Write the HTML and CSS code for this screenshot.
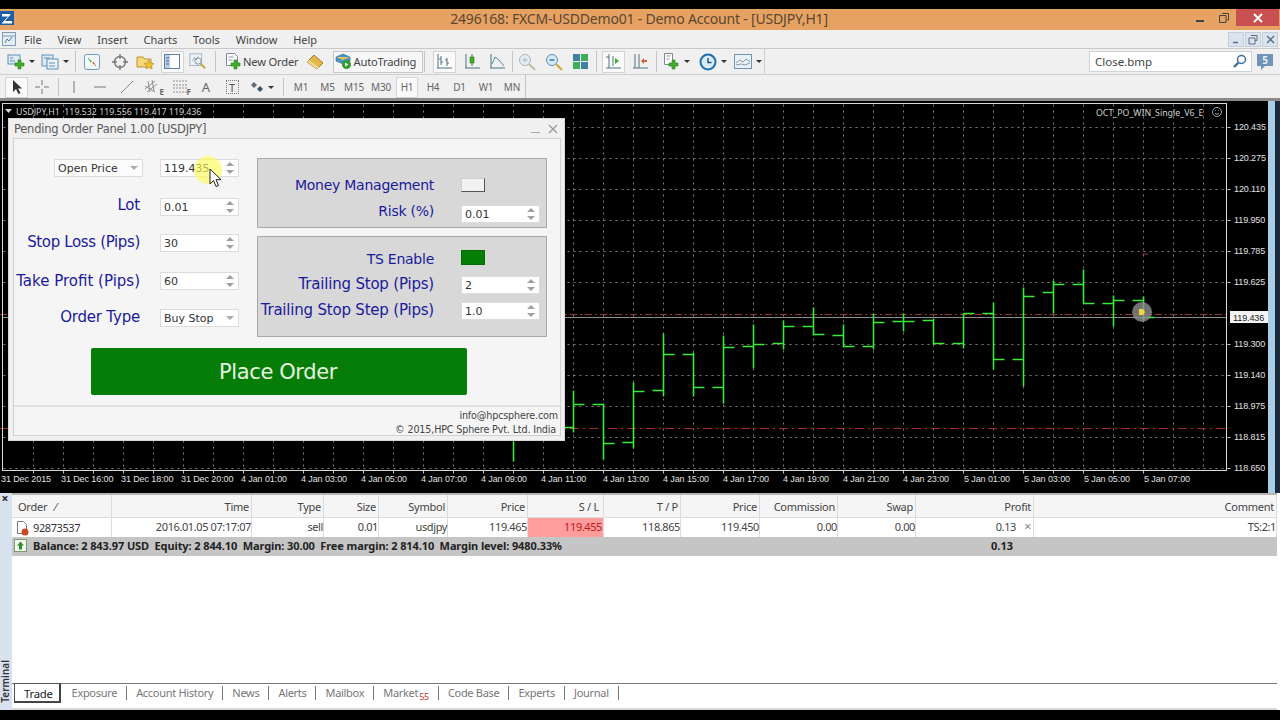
FILE: index.html
```html
<!DOCTYPE html>
<html lang="en">
<head>
<meta charset="utf-8">
<title>MetaTrader</title>
<link rel="stylesheet" href="styles.css">
</head>
<body>
<div class="app">
  <div class="blackbar"></div>

  <header class="titlebar">
    <svg class="logo" viewBox="0 0 14 14"><rect width="14" height="14" fill="#1c5fa8"/><path d="M2 3h9L5 10h7v2.500H1.500L8 5.500H2z" fill="#fff"/></svg>
    <span class="title">2496168: FXCM-USDDemo01 - Demo Account - [USDJPY,H1]</span>
    <div class="winctl">
      <span class="wbtn"><svg width="10" height="10" viewBox="0 0 10 10"><rect x="1" y="7" width="8" height="2" fill="#444"/></svg></span>
      <span class="wbtn"><svg width="10" height="10" viewBox="0 0 10 10"><path d="M3 .5h6.500v6.500H7.500M.5 2.500h6.500v7H.5z" fill="none" stroke="#444"/></svg></span>
      <span class="wclose"><svg width="10" height="10" viewBox="0 0 10 10"><path d="M1 1l8 8M9 1l-8 8" stroke="#fff" stroke-width="2"/></svg></span>
    </div>
  </header>

  <nav class="menubar">
    <svg class="menuicon" width="14" height="16" viewBox="0 0 14 16"><rect x=".5" y="1.500" width="13" height="13" fill="#e4edf6" stroke="#7f9bb8"/><path d="M1 5h12" stroke="#7f9bb8"/><path d="M3 12l2-4 2 2 3-4" fill="none" stroke="#4d7fa8"/></svg>
    <span class="menuitem">File</span><span class="menuitem">View</span><span class="menuitem">Insert</span><span class="menuitem">Charts</span><span class="menuitem">Tools</span><span class="menuitem">Window</span><span class="menuitem">Help</span>
    <div class="mdi">
      <span class="mdibtn"><svg width="8" height="8" viewBox="0 0 8 8"><path d="M1 6.500h5" stroke="#5a6f85" stroke-width="1.500"/></svg></span>
      <span class="mdibtn"><svg width="10" height="10" viewBox="0 0 10 10"><path d="M3 .5h6v5H7M1 3h6v6H1z" fill="none" stroke="#5a6f85"/></svg></span>
      <span class="mdibtn"><svg width="9" height="9" viewBox="0 0 9 9"><path d="M1 1l7 7M8 1l-7 7" stroke="#5a6f85" stroke-width="1.400"/></svg></span>
    </div>
  </nav>

  <div class="toolrow1">
    <div class="tb1">
      <span class="cell"><svg width="18" height="18" viewBox="0 0 18 18"><rect x="1" y="2" width="12" height="9" fill="#dfeaf4" stroke="#5f8fb5"/><path d="M3 5h3M3 8h5" stroke="#5f8fb5"/><path d="M11 7h3v3h3v3h-3v3h-3v-3H8v-3h3z" fill="#3fae2a" stroke="#2a7d1a" stroke-width=".6"/></svg><i class="caret"></i></span>
      <span class="cell"><svg width="18" height="18" viewBox="0 0 18 18"><rect x="1" y="2" width="11" height="11" fill="#dfeaf4" stroke="#5f8fb5"/><rect x="6" y="6" width="11" height="10" fill="#eaf1f8" stroke="#5f8fb5"/><path d="M3 5h6M8 10h6M8 13h6" stroke="#5f8fb5"/></svg><i class="caret"></i></span>
      <span class="sep"></span>
      <span class="cell"><svg width="18" height="18" viewBox="0 0 18 18"><rect x="1.500" y="1.500" width="15" height="15" rx="2" fill="#f4f8fb" stroke="#6e9bbd"/><path d="M6 6.500l3 1.500-1.500 1.500z" fill="#3fae2a"/><path d="M12 11.500l-3-1.500 1.500-1.500z" fill="#d8623a"/><path d="M5 5l3 3" stroke="#3fae2a"/><path d="M10 10l3 3" stroke="#d8623a"/></svg></span>
      <span class="cell"><svg width="18" height="18" viewBox="0 0 18 18"><circle cx="9" cy="9" r="5.500" fill="none" stroke="#777" stroke-width="1.400"/><path d="M9 1v5M9 12v5M1 9h5M12 9h5" stroke="#777" stroke-width="1.400"/></svg></span>
      <span class="cell"><svg width="19" height="18" viewBox="0 0 19 18"><path d="M1 4h6l2 2h6v8H1z" fill="#f5d777" stroke="#b8923a"/><path d="M13 7l1.500 3 3.500.5-2.500 2.300.6 3.200-3.100-1.600-3 1.600.6-3.200L8 10.500l3.500-.5z" fill="#f2c230" stroke="#a8862a" stroke-width=".6"/></svg></span>
      <span class="cell"><span class="activebox"><svg width="16" height="15" viewBox="0 0 16 15"><rect x=".5" y=".5" width="15" height="14" fill="#fff" stroke="#5f7f9f"/><rect x="1" y="1" width="5" height="13" fill="#b9d0e6"/><path d="M2 4h3M2 7h3M2 10h3" stroke="#44648a"/></svg></span></span>
      <span class="cell"><svg width="20" height="19" viewBox="0 0 20 19"><rect x="1" y="1" width="13" height="13" fill="#eef2f6" stroke="#9fb2c6"/><path d="M4 9l2-4 2 3 2-4" fill="none" stroke="#8aa0b6"/><circle cx="10" cy="9" r="3.500" fill="none" stroke="#7c8fa6"/><path d="M13 12l5 5" stroke="#c9a13a" stroke-width="2"/></svg></span>
      <span class="sep"></span>
      <span class="cell start"><svg width="18" height="19" viewBox="0 0 18 19"><path d="M2.500 1.500h8l3 3v9h-11z" fill="#fff" stroke="#7d8a98"/><path d="M4.500 5h5M4.500 8h4" stroke="#8a97a5"/><path d="M10 8h3v3h3v3h-3v3h-3v-3H7v-3h3z" fill="#3fae2a" stroke="#2a7d1a" stroke-width=".6"/></svg><span class="tbtext">New Order</span></span>
      <span class="cell"><svg width="20" height="18" viewBox="0 0 20 18"><path d="M9 2l9 8-6 6-10-7z" fill="#e4b64c" stroke="#a07a22"/><path d="M2 9l10 7 2-2L4 7z" fill="#f3d98c"/></svg></span>
      <span class="cell"><span class="autobox"><svg width="17" height="17" viewBox="0 0 17 17"><path d="M8 1l7 3v4l-7 3-7-3V4z" fill="#4b93c9" stroke="#2a6794" stroke-width=".6"/><path d="M1 4l7 3 7-3" fill="#e4c35a"/><circle cx="11.500" cy="11.500" r="4.500" fill="#2f9d2a"/><path d="M10 9.500l3.500 2-3.500 2z" fill="#fff"/></svg><span class="tbtext">AutoTrading</span></span></span>
      <span class="sepline"></span>
      <span class="cell"><span class="activebox"><svg class="chartic" width="17" height="17" viewBox="0 0 17 17"><path d="M1 15h15M2 1v14M5 3v9M5 6H3M5 9h2M11 5v8M11 7H9M11 10h2" stroke="#4f7386" fill="none"/></svg></span></span>
      <span class="cell"><svg width="17" height="17" viewBox="0 0 17 17"><path d="M1 15h15M2 1v14" stroke="#4f7386"/><path d="M8 1v12" stroke="#3d8a3a"/><rect x="6" y="4" width="4" height="6" fill="#3fae2a" stroke="#2a7d1a" stroke-width=".6"/></svg></span>
      <span class="cell"><svg width="17" height="17" viewBox="0 0 17 17"><path d="M1 15h15M2 1v14" stroke="#4f7386"/><path d="M3 11l3-7 4 3 5 6" fill="none" stroke="#5c8aa0"/></svg></span>
      <span class="sep"></span>
      <span class="cell"><svg width="18" height="18" viewBox="0 0 18 18"><circle cx="7" cy="7" r="5.500" fill="#e6eef5" stroke="#a9b5c1"/><path d="M4.500 7h5M7 4.500v5" stroke="#a9b5c1"/><path d="M11 11l6 6" stroke="#c5bd9c" stroke-width="2"/></svg></span>
      <span class="cell"><svg width="18" height="18" viewBox="0 0 18 18"><circle cx="7" cy="7" r="5.500" fill="#d8e9f6" stroke="#5c8db0"/><path d="M4.500 7h5" stroke="#3a6d92" stroke-width="1.400"/><path d="M11 11l6 6" stroke="#d3a63a" stroke-width="2"/></svg></span>
      <span class="cell"><svg width="17" height="17" viewBox="0 0 17 17"><rect x="1" y="1" width="7" height="7" fill="#3f7f9f"/><rect x="9" y="1" width="7" height="7" fill="#3fae5a"/><rect x="1" y="9" width="7" height="7" fill="#3fae5a"/><rect x="9" y="9" width="7" height="7" fill="#3f7f9f"/></svg></span>
      <span class="sep"></span>
      <span class="cell"><span class="activebox"><svg width="17" height="17" viewBox="0 0 17 17"><path d="M1 15h15M4 1v14M1 4h3M8 3v10" stroke="#4f7386" fill="none"/><path d="M10 5l4 3-4 3z" fill="#3fae2a"/></svg></span></span>
      <span class="cell"><svg width="17" height="17" viewBox="0 0 17 17"><path d="M1 15h15M3 1v14M7 1v14" stroke="#4f7386" fill="none"/><path d="M9 8l3-3v2h3v2h-3v2z" fill="#c9653a"/></svg></span>
      <span class="sep"></span>
      <span class="cell"><svg width="18" height="19" viewBox="0 0 18 19"><path d="M2.500 1.500h8v11h-8z" fill="#fff" stroke="#7d8a98"/><path d="M4.500 4h4M4.500 7h3" stroke="#8a97a5"/><path d="M10 8h3v3h3v3h-3v3h-3v-3H7v-3h3z" fill="#3fae2a" stroke="#2a7d1a" stroke-width=".6"/></svg><i class="caret"></i></span>
      <span class="cell"><svg width="18" height="18" viewBox="0 0 18 18"><circle cx="9" cy="9" r="7.500" fill="#dbeaf7" stroke="#1f6fb0" stroke-width="2"/><path d="M9 5v4.500h3.500" fill="none" stroke="#1f4f80" stroke-width="1.400"/></svg><i class="caret"></i></span>
      <span class="cell"><svg width="18" height="15" viewBox="0 0 18 15"><rect x=".5" y=".5" width="17" height="14" fill="#e9f1f8" stroke="#6f94b5"/><path d="M2 9l4-3 3 2 3-3 4 3M2 11l5-1 4 1 5-2" fill="none" stroke="#8a9aa8"/></svg><i class="caret"></i></span>
    </div>
    <div class="search">
      <span class="searchbox"><span>Close.bmp</span><svg width="15" height="15" viewBox="0 0 15 15"><circle cx="9.500" cy="5.500" r="4" fill="#fff" stroke="#3a6f9f" stroke-width="1.500"/><path d="M6.500 8.500L2 13" stroke="#3a6f9f" stroke-width="2.400"/></svg></span>
      <span class="chatbadge"><span class="chatnum">5</span></span>
    </div>
  </div>

  <div class="toolrow2">
    <div class="tb2">
      <span class="cell"><span class="activebox narrow"><svg width="12" height="16" viewBox="0 0 12 16"><path d="M2 1v12l3-3 2.500 5 2-1-2.500-4.500h4z" fill="#333"/></svg></span></span>
      <span class="cell"><svg width="16" height="16" viewBox="0 0 16 16"><path d="M8 1v5M8 10v5M1 8h5M10 8h5" stroke="#777"/></svg></span>
      <span class="sep"></span>
      <span class="cell"><svg width="4" height="14" viewBox="0 0 4 14"><path d="M2 1v12" stroke="#777"/></svg></span>
      <span class="cell"><svg width="14" height="4" viewBox="0 0 14 4"><path d="M1 2h12" stroke="#777"/></svg></span>
      <span class="cell"><svg width="14" height="14" viewBox="0 0 14 14"><path d="M1 13L13 1" stroke="#888"/></svg></span>
      <span class="cell"><svg width="18" height="18" viewBox="0 0 18 18"><path d="M1 11L11 3M3 14L13 6M1 8l10 6M4 3l2 11M8 2l2 11" stroke="#8a8f95" fill="none"/></svg><span class="subletter">E</span></span>
      <span class="cell"><svg width="16" height="16" viewBox="0 0 16 16"><path d="M1 2h14M1 6h14M1 9h14M1 13h14" stroke="#8a8f95" stroke-dasharray="2 1"/></svg><span class="subletter">F</span></span>
      <span class="cell letter">A</span>
      <span class="cell"><span class="tbox">T</span></span>
      <span class="cell"><svg width="14" height="13" viewBox="0 0 14 13"><path d="M1 4l3-3 3 3-3 3z" fill="#5f6a74"/><path d="M7 8l3-3 3 3-3 3z" fill="#3f5360"/></svg><i class="caret"></i></span>
      <span class="sep"></span>
      <span class="cell period">M1</span><span class="cell period">M5</span><span class="cell period">M15</span><span class="cell period">M30</span>
      <span class="cell period"><span class="activebox period-on">H1</span></span>
      <span class="cell period">H4</span><span class="cell period">D1</span><span class="cell period">W1</span><span class="cell period">MN</span>
    </div>
  </div>

  <main class="chart">
    <svg class="chartsvg" width="1280" height="392" viewBox="0 101 1280 392">
      <g class="grid">
        <path d="M3 127H1227M3 158H1227M3 189H1227M3 220H1227M3 251H1227M3 282H1227M3 344H1227M3 375H1227M3 406H1227M3 437H1227M3 468H1227"/>
        <path d="M33 104V470M63 104V470M93 104V470M123 104V470M153 104V470M183 104V470M213 104V470M243 104V470M273 104V470M303 104V470M333 104V470M363 104V470M393 104V470M423 104V470M453 104V470M483 104V470M513 104V470M543 104V470M573 104V470M603 104V470M633 104V470M663 104V470M693 104V470M723 104V470M753 104V470M783 104V470M813 104V470M843 104V470M873 104V470M903 104V470M933 104V470M963 104V470M993 104V470M1023 104V470M1053 104V470M1083 104V470M1113 104V470M1143 104V470M1173 104V470M1203 104V470"/>
      </g>
      <path class="lvl-a" d="M0 314H1227"/>
      <path class="lvl-b" d="M0 428H1227"/>
      <path class="bid" d="M3 317H1227"/>
      <rect class="frame" x="2.500" y="103.500" width="1224" height="367"/>
      <path class="ticks" d="M1227 127h3M1227 158h3M1227 189h3M1227 220h3M1227 251h3M1227 282h3M1227 344h3M1227 375h3M1227 406h3M1227 437h3M1227 468h3M33 470v3M63 470v3M93 470v3M123 470v3M153 470v3M183 470v3M213 470v3M243 470v3M273 470v3M303 470v3M333 470v3M363 470v3M393 470v3M423 470v3M453 470v3M483 470v3M513 470v3M543 470v3M573 470v3M603 470v3M633 470v3M663 470v3M693 470v3M723 470v3M753 470v3M783 470v3M813 470v3M843 470v3M873 470v3M903 470v3M933 470v3M963 470v3M993 470v3M1023 470v3M1053 470v3M1083 470v3M1113 470v3M1143 470v3"/>
      <path class="bars" d="M513 441V461
        M573 390V432M562 427H573M573 404H584
        M603 403V459M592 404H603M603 443H614
        M633 382V448M622 442H633M633 391H644
        M663 333V396M652 390H663M663 354H674
        M693 352V396M682 354H693M693 387H704
        M723 335V403M712 387H723M723 347H734
        M753 324V368M742 346H753M753 344H764
        M783 320V349M772 343H783M783 326H794
        M813 307V335M802 326H813M813 334H824
        M843 324V347M832 335H843M843 346H854
        M873 313V349M862 346H873M873 322H884
        M903 313V331M892 321H903M903 321H914
        M933 318V344M922 320H933M933 343H944
        M963 313V348M952 343H963M963 313H974
        M993 302V369M982 313H993M993 359H1004
        M1023 287V386M1012 359H1023M1023 296H1034
        M1053 280V313M1042 292H1053M1053 284H1064
        M1083 269V303M1072 284H1083M1083 303H1094
        M1113 295V326M1102 303H1113M1113 300H1124
        M1143 296V320M1132 300H1143M1143 317H1154"/>
      <path class="redtick" d="M1142 254H1148"/>
      <circle class="mark-o" cx="1142" cy="312" r="10"/>
      <path class="mark-i" d="M1139 309h4l2 3-2 3h-4z"/>
      <path class="tri" d="M5 109h7l-3.500 4z"/>
      <text class="t-head" x="16" y="114.500">USDJPY,H1  119.532 119.556 119.417 119.436</text>
      <text class="t-head" x="1096" y="115.500">OCT_PO_WIN_Single_V6_E</text>
      <circle class="smile" cx="1217" cy="112" r="4.500"/>
      <path class="smile" d="M1215 113.500q2 1.500 4 0M1215.300 110.500h.8M1218 110.500h.8"/>
      <g class="t-axis">
        <text x="1234" y="130">120.435</text><text x="1234" y="161">120.275</text><text x="1234" y="192">120.110</text><text x="1234" y="223">119.950</text><text x="1234" y="254">119.785</text><text x="1234" y="285">119.625</text><text x="1234" y="347">119.300</text><text x="1234" y="378">119.140</text><text x="1234" y="409">118.975</text><text x="1234" y="440">118.815</text><text x="1234" y="471">118.650</text>
        <text x="1" y="482">31 Dec 2015</text><text x="61" y="482">31 Dec 16:00</text><text x="121" y="482">31 Dec 18:00</text><text x="181" y="482">31 Dec 20:00</text><text x="241" y="482">4 Jan 01:00</text><text x="301" y="482">4 Jan 03:00</text><text x="361" y="482">4 Jan 05:00</text><text x="421" y="482">4 Jan 07:00</text><text x="481" y="482">4 Jan 09:00</text><text x="541" y="482">4 Jan 11:00</text><text x="603" y="482">4 Jan 13:00</text><text x="663" y="482">4 Jan 15:00</text><text x="723" y="482">4 Jan 17:00</text><text x="783" y="482">4 Jan 19:00</text><text x="843" y="482">4 Jan 21:00</text><text x="903" y="482">4 Jan 23:00</text><text x="964" y="482">5 Jan 01:00</text><text x="1024" y="482">5 Jan 03:00</text><text x="1084" y="482">5 Jan 05:00</text><text x="1144" y="482">5 Jan 07:00</text>
      </g>
      <rect class="pricebox" x="1230" y="311" width="38" height="12"/>
      <text class="t-price" x="1233" y="320.500">119.436</text>
      <rect class="scroll" x="1268" y="101" width="7" height="392"/>
      <rect class="scroll2" x="1275" y="101" width="5" height="392"/>
    </svg>

    <section class="panel">
      <div class="panelhead">
        <span class="paneltitle">Pending Order Panel 1.00 [USDJPY]</span>
        <svg class="panelctl" width="34" height="12" viewBox="0 0 34 12"><path d="M3 9.500h9" stroke="#aaa"/><path d="M21 2l8 8M29 2l-8 8" stroke="#999" stroke-width="1.300"/></svg>
      </div>
      <div class="panelbody">
        <div class="formgrid">
          <div class="leftcol">
            <span class="select wide">Open Price<i class="dd"></i></span>
            <span class="spin"><span>119.435</span><i class="ud"></i></span>
            <span class="lbl up2">Lot</span>
            <span class="spin"><span>0.01</span><i class="ud"></i></span>
            <span class="lbl up1 sl">Stop Loss (Pips)</span>
            <span class="spin"><span>30</span><i class="ud"></i></span>
            <span class="lbl tp">Take Profit (Pips)</span>
            <span class="spin"><span>60</span><i class="ud"></i></span>
            <span class="lbl up1">Order Type</span>
            <span class="spin"><span>Buy Stop</span><i class="dd"></i></span>
          </div>
          <div class="rightcol">
            <div class="group g1">
              <span class="lbl tight">Money Management</span><span class="toggle off"></span>
              <span class="lbl tight up3">Risk (%)</span><span class="spin"><span>0.01</span><i class="ud"></i></span>
            </div>
            <div class="group g2">
              <span class="lbl tight">TS Enable</span><span class="toggle on"></span>
              <span class="lbl up1">Trailing Stop (Pips)</span><span class="spin"><span>2</span><i class="ud"></i></span>
              <span class="lbl up1">Trailing Stop Step (Pips)</span><span class="spin"><span>1.0</span><i class="ud"></i></span>
            </div>
          </div>
        </div>
        <div class="placewrap"><button class="place">Place Order</button></div>
        <div class="panelfoot">
          <span>info@hpcsphere.com</span>
          <span class="copy">© 2015,HPC Sphere Pvt. Ltd. India</span>
        </div>
      </div>
    </section>

    <div class="hilite"></div>
    <svg class="cursor" width="14" height="20" viewBox="0 0 14 20"><path d="M1 1v15l3.500-3.500 2.500 6 2.500-1-2.500-5.800h5z" fill="#fff" stroke="#222"/></svg>
  </main>

  <section class="terminal">
    <aside class="termside"><span class="termx">×</span><span class="termlabel">Terminal</span></aside>
    <div class="termmain">
      <div class="row head">
        <span class="left">Order&nbsp;&nbsp;&nbsp;⁄</span><span>Time</span><span>Type</span><span>Size</span><span>Symbol</span><span>Price</span><span class="sl-h">S / L</span><span>T / P</span><span>Price</span><span>Commission</span><span>Swap</span><span>Profit</span><span>Comment</span>
      </div>
      <div class="row data">
        <span class="left ordercell"><svg width="16" height="16" viewBox="0 0 16 16"><path d="M3.500 1.500h6l3 3v9h-9z" fill="#fff" stroke="#777"/><circle cx="11" cy="12" r="3.500" fill="#c9482a"/></svg>92873537</span><span>2016.01.05 07:17:07</span><span>sell</span><span>0.01</span><span>usdjpy</span><span>119.465</span><span class="slcell">119.455</span><span>118.865</span><span>119.450</span><span>0.00</span><span>0.00</span><span class="profit">0.13<i class="rowx">×</i></span><span>TS:2:1</span>
      </div>
      <div class="summary">
        <svg class="sumic" width="13" height="13" viewBox="0 0 13 13"><rect x=".5" y=".5" width="12" height="12" fill="#f4f8f0" stroke="#7a9a6a"/><path d="M6.500 2.500l3.500 4H8v4H5v-4H3z" fill="#2f8f2a"/></svg>
        <b class="sumtext">Balance: 2 843.97 USD&nbsp; Equity: 2 844.10&nbsp; Margin: 30.00&nbsp; Free margin: 2 814.10&nbsp; Margin level: 9480.33%</b>
        <b class="sumprofit">0.13</b>
      </div>
      <div class="tabs">
        <span class="tab active">Trade</span><span class="tab">Exposure</span><span class="tab">Account History</span><span class="tab">News</span><span class="tab">Alerts</span><span class="tab">Mailbox</span><span class="tab">Market<sub class="count">55</sub></span><span class="tab">Code Base</span><span class="tab">Experts</span><span class="tab">Journal</span>
      </div>
    </div>
  </section>

  <div class="blackfoot"></div>
</div>
</body>
</html>
```

FILE: styles.css
```css
* { box-sizing: border-box; }
html, body { margin: 0; padding: 0; background: #000; }
body { width: 1280px; height: 720px; overflow: hidden; font-family: "Noto Sans", "Liberation Sans", sans-serif; font-size: 12px; color: #333; }
.app { display: flex; flex-direction: column; width: 1280px; height: 720px; }
.blackbar { height: 9px; background: #000; flex: none; }
.blackfoot { height: 10px; background: #000; flex: none; }

.titlebar { height: 21px; flex: none; background: #e6a262; position: relative; display: flex; align-items: center; justify-content: center; padding: 0 2px 2px 0; }
.logo { position: absolute; left: 0; top: 2px; width: 14px; height: 14px; }
.title { font-size: 14px; color: #5a4630; letter-spacing: -.19px; }
.winctl { position: absolute; right: 1px; top: 0; height: 17px; display: flex; }
.wbtn { width: 24px; height: 17px; display: flex; align-items: center; justify-content: center; }
.wclose { width: 43px; height: 17px; background: #c85050; display: flex; align-items: center; justify-content: center; }

.menubar { height: 18px; flex: none; background: #f0f0f0; display: flex; align-items: center; padding-left: 2px; position: relative; }
.menuicon { margin-right: 8px; }
.menuitem { margin-right: 15.800px; font-size: 11px; color: #444; }
.mdi { position: absolute; right: 2px; top: 2px; display: flex; gap: 1px; }
.mdibtn { width: 16px; height: 15px; background: #dbe4ee; border: 1px solid #c5ced8; display: flex; align-items: center; justify-content: center; }

.toolrow1 { height: 27px; flex: none; background: #f0f0f0; border-top: 1px solid #c9c9c9; border-bottom: 1px solid #cfcfcf; display: flex; align-items: center; padding-left: 4px; position: relative; }
.toolrow2 { height: 26px; flex: none; background: #f0f0f0; border-bottom: 3px solid #8a8a8a; padding-left: 4px; display: flex; }
.tb1 { display: grid; height: 25px; grid-template-columns: 34px 34px 7px 26px 30px 20px 34px 18px 16px 79px 26px 96px 3px 34px 23px 26px 5px 24px 30px 22px 11px 23px 30px 3px 36px 38px 32px; border-right: 1px solid #d0d0d0; }
.tb2 { display: grid; height: 23px; padding-top: 1px; grid-template-columns: 25px 26px 6px 26px 26px 27px 26px 27px 26px 26px 34px 8px 28px 25px 28px 26px 26px 26px 27px 26px 26px; border-right: 1px solid #c4c4c4; }
.cell { display: flex; align-items: center; justify-content: center; position: relative; min-width: 0; }
.cell.start { justify-content: flex-start; padding-left: 1px; }
.caret { width: 0; height: 0; border-left: 3px solid transparent; border-right: 3px solid transparent; border-top: 3px solid #333; margin-left: 4px; flex: none; }
.sep { width: 1px; justify-self: center; background: #c4c4c4; margin: 2px 0; }
.sepline { width: 1px; background: #c4c4c4; margin: 2px 0; }
.activebox { width: 23px; height: 22px; background: #fafafa; border: 1px solid #d4d4d4; display: flex; align-items: center; justify-content: center; }
.activebox.narrow { width: 23px; height: 21px; }
.activebox.period-on { width: 22px; height: 21px; }
.autobox { margin-left: 3px; width: 90px; height: 22px; background: #f7f7f7; border: 1px solid #c8c8c8; display: flex; align-items: center; padding-left: 1px; gap: 1px; }
.tbtext { font-size: 11.200px; color: #444; white-space: nowrap; letter-spacing: -.2px; margin-left: 1px; }
.subletter { position: absolute; right: 2px; bottom: 1px; font-size: 8px; font-weight: 700; color: #666; }
.letter { font-size: 13px; color: #666; }
.tbox { font-size: 11px; color: #555; border: 1px dotted #777; width: 13px; height: 14px; display: flex; align-items: center; justify-content: center; }
.period { font-size: 10px; color: #666; letter-spacing: -.2px; }

.search { position: absolute; left: 1089px; top: 2px; display: flex; align-items: center; }
.searchbox { width: 163px; height: 21px; background: #fff; border: 1px solid #cdd3da; display: flex; align-items: center; justify-content: space-between; padding: 0 4px 0 5px; font-size: 11.500px; color: #444; }
.chatbadge { width: 16px; height: 12px; background: #6f94b8; margin: 0 0 3px 5px; display: flex; align-items: center; justify-content: center; position: relative; }
.chatbadge::after { content: ""; position: absolute; left: 4px; top: 12px; width: 0; height: 0; border-top: 4px solid #6f94b8; border-right: 4px solid transparent; }
.chatnum { color: #e6eef6; font-size: 10px; font-weight: 700; line-height: 12px; }

.chart { height: 392px; flex: none; background: #000; position: relative; }
.chartsvg { display: block; }
.grid { transform: translate(.5px, .5px); }
.grid path { stroke: #7e7e7e; stroke-width: 1; stroke-dasharray: 2 4; fill: none; }
.lvl-a { stroke: #96392e; stroke-dasharray: 7 3 2 3; fill: none; transform: translateY(.5px); }
.lvl-b { stroke: #a82c2a; stroke-dasharray: 9 4 2 4; fill: none; transform: translateY(.5px); }
.bid { stroke: #8e8e8e; transform: translateY(.5px); }
.frame { fill: none; stroke: #d8d8d8; }
.ticks { stroke: #c8c8c8; fill: none; transform: translate(.5px, .5px); }
.bars { stroke: #36ea36; stroke-width: 1.600; fill: none; transform: translate(.5px, .5px); }
.redtick { stroke: #a03030; }
.mark-o { fill: #8f8f8f; opacity: .8; }
.mark-i { fill: #f2d640; }
.tri { fill: #d8d8d8; }
.t-head { font-family: "Noto Sans", "Liberation Sans", sans-serif; font-size: 8.800px; fill: #d0d0d0; white-space: pre; }
.smile { fill: none; stroke: #d0d0d0; stroke-width: .8; }
.t-axis text { font-family: "Liberation Sans", sans-serif; font-size: 9px; letter-spacing: -.1px; fill: #e0e0e0; }
.pricebox { fill: #f4f4f4; }
.t-price { font-family: "Liberation Sans", sans-serif; font-size: 9px; letter-spacing: -.1px; fill: #222; }
.scroll { fill: #aacde6; }
.scroll2 { fill: #1a2a3a; }

.panel { position: absolute; left: 8px; top: 17px; width: 557px; height: 323px; background: #f0f0f0; border: 1px solid #d8d8d8; display: flex; flex-direction: column; font-family: "DejaVu Sans", "Noto Sans", sans-serif; }
.panelhead { height: 19px; flex: none; display: flex; align-items: center; justify-content: space-between; padding: 0 2px 0 5px; }
.paneltitle { font-size: 11.500px; color: #5a5a5a; letter-spacing: -.25px; }
.panelbody { flex: 1; margin: 0 3px 4px 4px; background: #f5f5f5; border: 1px solid #d0d0d0; display: flex; flex-direction: column; min-height: 0; }
.formgrid { display: grid; flex: none; grid-template-columns: 243px 290px; padding-top: 20px; height: 206px; }
.leftcol { display: grid; grid-template-columns: 126px 79px; column-gap: 20px; grid-template-rows: 39px 36px 38px 37px 18px; align-items: start; }
.rightcol { display: flex; flex-direction: column; gap: 8px; margin-top: -1px; }
.group { background: #d8d8d8; border: 1px solid #a8a8a8; display: grid; grid-template-columns: 176px 78px; column-gap: 27px; width: 290px; justify-items: end; align-content: start; }
.g1 { height: 70px; padding-top: 17px; grid-template-rows: 29px 18px; }
.g2 { height: 101px; padding-top: 13px; grid-template-rows: 26px 26px 18px; }
.lbl { font-size: 15px; line-height: 18px; color: #1a1a9c; letter-spacing: -.2px; white-space: nowrap; justify-self: end; }
.lbl.tight { font-size: 14px; letter-spacing: -.25px; }
.lbl.sl { letter-spacing: -.35px; }
.lbl.tp { letter-spacing: 0; }
.up1 { margin-top: -1px; }
.up2 { margin-top: -2px; }
.up3 { margin-top: -3px; }
.group .spin, .group .toggle { justify-self: start; }
.select, .spin { height: 18px; background: #fff; border: 1px solid #dcdcdc; display: flex; align-items: center; justify-content: space-between; font-size: 11px; color: #333; padding: 0 4px 0 3px; position: relative; }
.spin { width: 79px; }
.select.wide { width: 89px; justify-self: end; margin-right: -3px; padding-left: 3px; }
.select { background: #fbfbfb; }
.dd { width: 0; height: 0; border-left: 4px solid transparent; border-right: 4px solid transparent; border-top: 4px solid #aaa; flex: none; }
.ud { width: 8px; height: 12px; flex: none; position: relative; }
.ud::before, .ud::after { content: ""; position: absolute; left: 0; width: 0; height: 0; border-left: 4px solid transparent; border-right: 4px solid transparent; }
.ud::before { top: 0; border-bottom: 4px solid #a0a0a0; }
.ud::after { bottom: 0; border-top: 4px solid #a0a0a0; }
.toggle { width: 24px; height: 14px; }
.toggle.off { background: #f2f2f2; border: 1px solid #cfcfcf; border-right-color: #555; border-bottom-color: #555; margin-top: 2px; }
.toggle.on { background: #067e06; border: 1px solid #0a6a0a; height: 15px; }
.placewrap { padding: 3px 0 0 77px; height: 62px; border-bottom: 2px solid #e2e2e2; flex: none; }
.place { display: block; width: 376px; height: 47px; background: #067d06; color: #e6f5e2; border: 0; border-radius: 2px; font-family: "DejaVu Sans", "Noto Sans", sans-serif; font-size: 21px; letter-spacing: -.4px; padding: 1px 2px 0 0; }
.panelfoot { flex: none; display: flex; flex-direction: column; align-items: flex-end; padding: 2px 2px 0 0; font-size: 9.600px; line-height: 14px; color: #444; letter-spacing: -.15px; }
.copy { margin-right: 2px; }

.hilite { position: absolute; left: 194px; top: 55px; width: 28px; height: 28px; border-radius: 50%; background: rgba(255, 250, 90, .65); }
.cursor { position: absolute; left: 209px; top: 67px; }

.terminal { height: 217px; flex: none; background: #fff; display: flex; }
.termside { width: 12px; flex: none; background: #d7e2ee; position: relative; }
.termx { position: absolute; left: 0; top: 0; width: 10px; text-align: center; font-size: 12px; font-weight: 700; line-height: 12px; color: #222; }
.termlabel { position: absolute; left: 0; bottom: 7px; writing-mode: vertical-rl; transform: rotate(180deg); font-size: 10px; font-weight: 600; line-height: 11px; color: #333; }
.termmain { flex: 1; display: flex; flex-direction: column; border-top: 2px solid #b4b4b4; margin-right: 3px; background: #fff; }
.row { display: grid; grid-template-columns: 100px 140px 72px 55px 69px 80px 76px 77px 79px 78px 78px 118px 243px; }
.row > span { text-align: right; padding-right: 2px; white-space: nowrap; font-size: 11px; letter-spacing: -.25px; border-right: 1px solid #dcdcdc; color: #444; }
.row > span.left { text-align: left; }
.row.head { height: 23px; line-height: 24px; background: #f5f5f5; border-bottom: 1px solid #dcdcdc; }
.row.data { height: 19px; line-height: 17px; }
.row.data > span { padding-right: 0; letter-spacing: -.4px; }
.row > .sl-h { padding-right: 4px; }
.row.data > .ordercell { display: flex; align-items: center; gap: 3px; padding-left: 2px; color: #333; }
.row.head .left { padding-left: 6px; }
.row.data > .slcell { background: #ff9c9c; color: #c01818; padding-right: 1px; }
.rowx { font-style: normal; color: #888; margin-left: 8px; margin-right: 2px; font-size: 13px; }
.summary { height: 19px; background: #c5c5c5; display: grid; grid-template-columns: 19px 980px; align-items: center; padding: 0 0 2px 2px; font-size: 11px; color: #222; position: relative; }
.sumic { margin-left: 0; }
.sumtext { grid-column: 2; grid-row: 1; font-weight: 700; white-space: nowrap; letter-spacing: -.1px; }
.sumprofit { grid-column: 2; grid-row: 1; font-weight: 700; text-align: right; white-space: nowrap; }
.tabs { margin-top: auto; height: 27px; flex: none; display: flex; align-items: flex-start; border-bottom: 2px solid #d8d8d8; padding-left: 2px; background: linear-gradient(#777 1px, #fff 1px); }
.tab { font-size: 11px; color: #777; padding: 0 9px; height: 14px; line-height: 14px; margin-top: 3px; border-right: 1px solid #777; letter-spacing: -.3px; white-space: nowrap; }
.tab.active { height: 20px; margin: 0 2px 0 0; line-height: 20px; border: 1px solid #555; border-bottom: 2px solid #444; border-right: 2px solid #444; background: #fff; color: #222; padding: 0 6px 0 9px; font-size: 11.400px; }
.count { font-size: 9px; color: #d03030; vertical-align: sub; margin-left: 1px; line-height: 0; }
```
